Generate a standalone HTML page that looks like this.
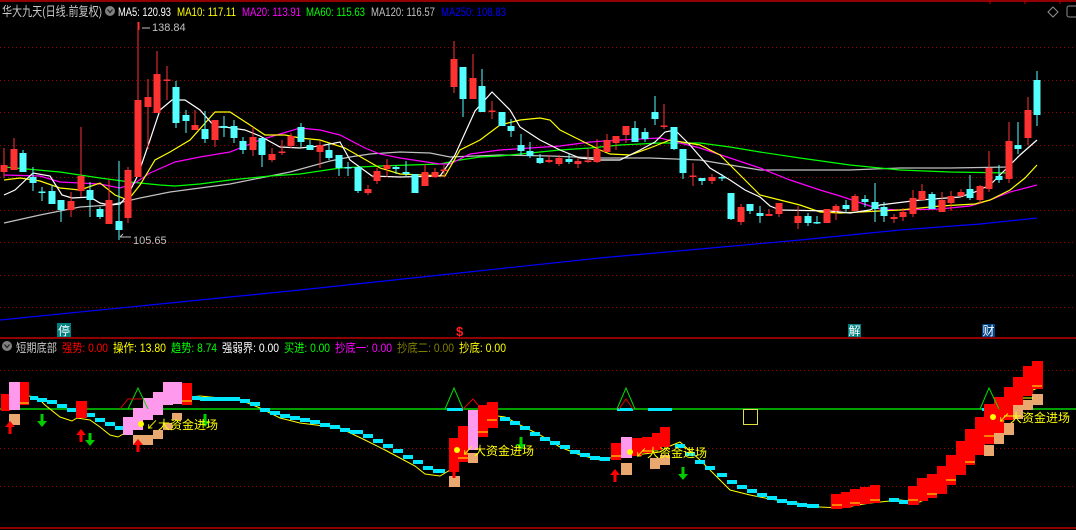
<!DOCTYPE html>
<html><head><meta charset="utf-8"><style>
html,body{margin:0;padding:0;background:#000;width:1076px;height:530px;overflow:hidden}
svg{display:block}
text{font-family:"Liberation Sans","Noto Sans CJK SC",sans-serif}
</style></head><body>
<svg width="1076" height="530" viewBox="0 0 1076 530" xmlns="http://www.w3.org/2000/svg">
<rect width="1076" height="530" fill="#000"/>
<!-- borders -->
<line x1="0" y1="1" x2="1076" y2="1" stroke="#c00000" stroke-width="1.5"/>
<line x1="990" y1="0" x2="990" y2="4" stroke="#c00000"/><line x1="1025" y1="0" x2="1025" y2="4" stroke="#c00000"/><line x1="1060" y1="0" x2="1060" y2="4" stroke="#c00000"/>
<line x1="0" y1="338" x2="1076" y2="338" stroke="#c00000" stroke-width="1.5"/>
<line x1="0" y1="528" x2="1076" y2="528" stroke="#c00000" stroke-width="1.5"/>
<!-- grid -->
<g stroke="#a00000" stroke-dasharray="1 3" stroke-width="1">
<line x1="0" y1="47.5" x2="1076" y2="47.5"/><line x1="0" y1="80.5" x2="1076" y2="80.5"/><line x1="0" y1="112.5" x2="1076" y2="112.5"/><line x1="0" y1="145.5" x2="1076" y2="145.5"/><line x1="0" y1="177.5" x2="1076" y2="177.5"/><line x1="0" y1="210.5" x2="1076" y2="210.5"/><line x1="0" y1="242.5" x2="1076" y2="242.5"/><line x1="0" y1="275.5" x2="1076" y2="275.5"/><line x1="0" y1="307.5" x2="1076" y2="307.5"/>
<line x1="0" y1="370.5" x2="1076" y2="370.5"/><line x1="0" y1="448.5" x2="1076" y2="448.5"/><line x1="0" y1="486.5" x2="1076" y2="486.5"/>
</g>
<!-- header -->
<text x="2" y="16" font-size="13" fill="#c8c8c8" textLength="100" lengthAdjust="spacingAndGlyphs">华大九天(日线.前复权)</text>
<circle cx="110" cy="11" r="5" fill="#808080"/><path d="M107.5 9.5 L110 12.5 L112.5 9.5" stroke="#222" stroke-width="1.3" fill="none"/>
<g font-size="12">
<text x="118" y="16" fill="#ffffff" textLength="53" lengthAdjust="spacingAndGlyphs">MA5: 120.93</text>
<text x="177" y="16" fill="#ffff00" textLength="59" lengthAdjust="spacingAndGlyphs">MA10: 117.11</text>
<text x="242" y="16" fill="#ff00ff" textLength="59" lengthAdjust="spacingAndGlyphs">MA20: 113.91</text>
<text x="306" y="16" fill="#00ff00" textLength="59" lengthAdjust="spacingAndGlyphs">MA60: 115.63</text>
<text x="371" y="16" fill="#c0c0c0" textLength="64" lengthAdjust="spacingAndGlyphs">MA120: 116.57</text>
<text x="441" y="16" fill="#0000ff" textLength="65" lengthAdjust="spacingAndGlyphs">MA250: 108.83</text>
</g>
<path d="M1053 7 L1058 12 L1053 17 L1048 12 Z" stroke="#909090" fill="none"/>
<rect x="1067" y="6" width="12" height="11" rx="2" stroke="#909090" fill="none"/>
<!-- labels -->
<line x1="139" y1="22" x2="139" y2="30" stroke="#ff3030"/><path d="M142 28 L150 28" stroke="#c0c0c0"/>
<text x="152" y="31" font-size="11" fill="#c0c0c0">138.84</text>
<path d="M120 237 L131 237 M120 237 L123 234" stroke="#c0c0c0" fill="none"/>
<text x="133" y="244" font-size="11" fill="#c0c0c0">105.65</text>
<!-- MA lines -->
<g fill="none" stroke-width="1.2">
<polyline stroke="#0000ff" points="0,320 150,305 300,290 450,274 600,258 700,249 800,240 900,230 980,224 1037,218"/>
<polyline stroke="#c0c0c0" points="4,223 40,215 80,207 110,205 140,198 170,192 200,188 230,184 260,178 290,172 330,161 350,157 370,154 400,152 430,153 450,157 500,155 550,156 600,158 650,158 700,160 730,165 760,170 800,170 850,170 900,168 950,168 1010,167"/>
<polyline stroke="#00ff00" points="4,167 60,172 100,178 130,182 160,185 175,186 200,184 230,180 270,176 300,174 340,168 360,167 380,166 440,164 460,160 480,157 500,156 540,152 560,150 590,148 620,145 660,143 700,143 730,147 760,152 800,158 850,165 900,170 950,172 1010,173"/>
<polyline stroke="#ff00ff" points="4,175 40,176 60,182 100,184 120,188 135,183 150,173 175,162 200,157 230,152 260,140 300,128 320,130 340,135 365,148 380,154 400,158 420,161 440,164 450,164 470,154 500,150 530,148 560,146 590,142 620,140 660,138 700,148 730,158 760,168 790,180 820,190 840,196 855,201 870,206 880,209 900,210 940,209 970,206 990,200 1010,192 1037,185"/>
<polyline stroke="#ffff00" points="4,180 20,178 40,181 60,188 80,190 100,183 115,195 128,200 140,185 155,160 170,152 190,140 215,112 230,112 250,125 265,135 285,135 300,138 320,140 345,148 380,168 400,174 445,176 460,150 480,140 500,125 520,120 540,118 550,120 560,130 580,140 600,150 610,154 630,155 650,148 670,140 700,145 720,155 740,175 760,195 780,200 800,205 820,212 840,213 860,212 900,210 940,206 975,204 990,200 1010,190 1025,178 1037,165"/>
<polyline stroke="#ffffff" points="4,195 15,190 33,173 50,176 62,195 72,198 90,197 100,203 110,205 120,204 128,195 138,175 150,140 160,110 172,100 185,100 200,110 215,127 225,127 245,130 260,136 280,147 300,148 320,146 340,142 350,160 372,176 400,177 440,176 455,155 475,111 492,92 500,100 510,110 520,127 540,140 560,150 580,158 600,160 620,160 640,150 655,142 665,132 675,130 690,145 710,168 730,180 745,190 760,197 770,206 780,210 830,211 850,213 870,210 880,205 920,200 960,197 975,192 990,185 1000,175 1020,155 1037,140"/>
</g>
<!-- red candles -->
<g stroke="#ff3232" fill="#ff3232">
<path d="M4 148V178M14 138V170M71 192V217M81 127V197M109 180V224M128 167V223M138 22V177M148 79V149M157 51V113M167 66V100M195 110V130M215 120V147M253 127V156M272 148V162M282 140V155M291 133V148M320 141V168M368 185V195M377 168V184M387 159V177M425 164V186M435 168V178M444 165V177M454 41V93M473 54V99M492 101V119M549 155V163M559 155V166M578 158V168M588 148V163M597 139V163M607 134V152M616 136V150M626 126V143M664 104V129M693 163V186M712 174V184M741 204V225M769 209V216M779 203V217M798 206V229M827 209V223M836 204V220M855 194V211M894 214V223M903 208V221M913 190V217M922 184V200M942 192V212M951 191V211M961 189V197M980 185V204M989 151V192M1009 122V183M1028 97V145" fill="none"/>
<g stroke="none">
<rect x="0.5" y="165" width="7" height="7"/><rect x="10.5" y="149" width="7" height="21"/><rect x="67.5" y="201" width="7" height="9"/><rect x="77.5" y="176" width="7" height="15"/><rect x="105.5" y="200" width="7" height="24"/><rect x="124.5" y="170" width="7" height="48"/><rect x="134.5" y="100" width="7" height="77"/><rect x="144.5" y="97" width="7" height="10"/><rect x="153.5" y="74" width="7" height="39"/><rect x="163.5" y="79.5" width="7" height="1.5"/><rect x="191.5" y="125" width="7" height="5"/><rect x="211.5" y="120" width="7" height="20"/><rect x="249.5" y="137" width="7" height="13"/><rect x="268.5" y="154" width="7" height="6"/><rect x="278.5" y="151.5" width="7" height="1.5"/><rect x="287.5" y="136" width="7" height="10"/><rect x="316.5" y="145" width="7" height="7"/><rect x="364.5" y="189" width="7" height="4"/><rect x="373.5" y="171" width="7" height="10"/><rect x="383.5" y="165" width="7" height="4"/><rect x="421.5" y="172" width="7" height="14"/><rect x="431.5" y="172" width="7" height="5"/><rect x="440.5" y="169.5" width="7" height="1.5"/><rect x="450.5" y="59" width="7" height="28"/><rect x="469.5" y="78" width="7" height="21"/><rect x="488.5" y="110.5" width="7" height="1.5"/><rect x="545.5" y="160" width="7" height="2"/><rect x="555.5" y="158" width="7" height="6"/><rect x="574.5" y="161" width="7" height="3"/><rect x="584.5" y="160.5" width="7" height="1.5"/><rect x="593.5" y="149" width="7" height="13"/><rect x="603.5" y="140" width="7" height="12"/><rect x="612.5" y="136" width="7" height="7"/><rect x="622.5" y="126" width="7" height="9"/><rect x="660.5" y="125.5" width="7" height="1.5"/><rect x="689.5" y="175.5" width="7" height="1.5"/><rect x="708.5" y="177" width="7" height="4"/><rect x="737.5" y="207" width="7" height="15"/><rect x="765.5" y="214" width="7" height="2"/><rect x="775.5" y="203" width="7" height="11"/><rect x="794.5" y="216" width="7" height="7"/><rect x="823.5" y="209" width="7" height="14"/><rect x="832.5" y="206" width="7" height="5"/><rect x="851.5" y="196" width="7" height="15"/><rect x="890.5" y="217" width="7" height="2"/><rect x="899.5" y="212" width="7" height="5"/><rect x="909.5" y="198" width="7" height="16"/><rect x="918.5" y="191" width="7" height="9"/><rect x="938.5" y="200" width="7" height="12"/><rect x="947.5" y="196" width="7" height="7"/><rect x="957.5" y="192" width="7" height="4"/><rect x="976.5" y="186" width="7" height="14"/><rect x="985.5" y="168" width="7" height="21"/><rect x="1005.5" y="141" width="7" height="38"/><rect x="1024.5" y="110" width="7" height="28"/>
</g></g>
<!-- cyan candles -->
<g stroke="#54ffff" fill="#54ffff">
<path d="M23 150V172M33 167V191M42 187V201M52 185V204M61 200V222M90 182V217M100 207V219M119 161V240M176 81V128M186 110V133M205 111V143M224 116V137M234 120V143M243 137V154M262 138V167M301 123V147M310 140V150M329 144V160M339 155V176M348 162V176M358 167V193M396 165V174M406 161V176M415 174V193M463 67V117M482 69V112M502 112V126M511 119V137M521 134V155M530 142V158M540 154V164M569 154V164M635 121V142M645 128V142M655 96V125M674 127V150M683 149V179M702 178V185M722 174V181M731 193V220M750 204V214M760 206V223M808 213V226M817 216V224M846 200V213M865 195V207M875 183V222M884 202V222M932 192V209M970 175V200M999 165V183M1018 122V154M1037 71V126" fill="none"/>
<g stroke="none">
<rect x="19.5" y="153" width="7" height="19"/><rect x="29.5" y="177" width="7" height="6"/><rect x="38.5" y="191.5" width="7" height="1.5"/><rect x="48.5" y="191" width="7" height="13"/><rect x="57.5" y="200" width="7" height="10"/><rect x="86.5" y="190" width="7" height="10"/><rect x="96.5" y="209" width="7" height="8"/><rect x="115.5" y="221" width="7" height="9"/><rect x="172.5" y="87" width="7" height="36"/><rect x="182.5" y="115" width="7" height="6"/><rect x="201.5" y="129" width="7" height="10"/><rect x="220.5" y="126" width="7" height="2"/><rect x="230.5" y="126" width="7" height="12"/><rect x="239.5" y="141" width="7" height="9"/><rect x="258.5" y="138" width="7" height="17"/><rect x="297.5" y="127" width="7" height="15"/><rect x="306.5" y="145" width="7" height="5"/><rect x="325.5" y="150" width="7" height="8"/><rect x="335.5" y="155" width="7" height="13"/><rect x="344.5" y="167" width="7" height="1.5"/><rect x="354.5" y="167" width="7" height="24"/><rect x="392.5" y="167" width="7" height="2"/><rect x="402.5" y="172" width="7" height="2"/><rect x="411.5" y="174" width="7" height="19"/><rect x="459.5" y="67" width="7" height="32"/><rect x="478.5" y="86" width="7" height="26"/><rect x="498.5" y="112" width="7" height="14"/><rect x="507.5" y="126" width="7" height="5"/><rect x="517.5" y="145" width="7" height="6"/><rect x="526.5" y="151" width="7" height="5"/><rect x="536.5" y="158" width="7" height="5"/><rect x="565.5" y="159" width="7" height="3"/><rect x="631.5" y="128" width="7" height="14"/><rect x="641.5" y="132" width="7" height="7"/><rect x="651.5" y="112" width="7" height="7"/><rect x="670.5" y="127" width="7" height="22"/><rect x="679.5" y="149" width="7" height="24"/><rect x="698.5" y="178" width="7" height="3"/><rect x="718.5" y="177" width="7" height="1.5"/><rect x="727.5" y="193" width="7" height="26"/><rect x="746.5" y="204" width="7" height="7"/><rect x="756.5" y="213" width="7" height="3"/><rect x="804.5" y="216" width="7" height="7"/><rect x="813.5" y="222" width="7" height="1.5"/><rect x="842.5" y="205" width="7" height="4"/><rect x="861.5" y="199" width="7" height="3"/><rect x="871.5" y="202" width="7" height="7"/><rect x="880.5" y="207" width="7" height="9"/><rect x="928.5" y="194" width="7" height="15"/><rect x="966.5" y="189" width="7" height="9"/><rect x="995.5" y="176" width="7" height="4"/><rect x="1014.5" y="145" width="7" height="4"/><rect x="1033.5" y="80" width="7" height="35"/>
</g></g>
<!-- bottom tags -->
<rect x="57" y="323" width="14" height="14" fill="#008080"/><text x="58" y="335" font-size="12" fill="#fff">停</text>
<text x="456" y="336" font-size="13" font-weight="bold" fill="#ff2020">$</text>
<rect x="848" y="324" width="13" height="13" fill="#008080"/><text x="848.5" y="335" font-size="12" fill="#fff">解</text>
<rect x="982" y="324" width="13" height="13" fill="#004488"/><text x="982.5" y="335" font-size="12" fill="#fff">财</text>
<!-- lower header -->
<circle cx="7" cy="346" r="5" fill="#808080"/><path d="M4.5 344.5 L7 347.5 L9.5 344.5" stroke="#222" stroke-width="1.3" fill="none"/>
<g font-size="12">
<text x="16" y="352" fill="#c8c8c8" textLength="41" lengthAdjust="spacingAndGlyphs">短期底部</text>
<text x="62" y="352" fill="#ff0000" textLength="46" lengthAdjust="spacingAndGlyphs">强势: 0.00</text>
<text x="113" y="352" fill="#ffff00" textLength="53" lengthAdjust="spacingAndGlyphs">操作: 13.80</text>
<text x="171" y="352" fill="#00ff00" textLength="46" lengthAdjust="spacingAndGlyphs">趋势: 8.74</text>
<text x="222" y="352" fill="#ffffff" textLength="57" lengthAdjust="spacingAndGlyphs">强弱界: 0.00</text>
<text x="284" y="352" fill="#00ff00" textLength="46" lengthAdjust="spacingAndGlyphs">买进: 0.00</text>
<text x="335" y="352" fill="#ff00ff" textLength="57" lengthAdjust="spacingAndGlyphs">抄底一: 0.00</text>
<text x="397" y="352" fill="#808000" textLength="57" lengthAdjust="spacingAndGlyphs">抄底二: 0.00</text>
<text x="459" y="352" fill="#ffff00" textLength="47" lengthAdjust="spacingAndGlyphs">抄底: 0.00</text>
</g>
<!-- lower panel -->
<line x1="0" y1="409" x2="1076" y2="409" stroke="#00ff00" stroke-width="1.2"/>
<!-- yellow line -->
<polyline fill="none" stroke="#ffff00" stroke-width="1" points="28,396 37,397 45,405 60,417 72,421 77,418 90,420 100,427 110,435 118,437 125,433 140,420 160,405 180,398 200,396 240,400 260,408 280,418 300,423 340,428 365,440 385,450 400,458 415,466 425,474 440,476 450,470 465,440 478,420 490,415 505,417 520,425 540,435 560,447 580,455 600,460 610,458 660,452 670,446 680,442 700,460 710,470 730,490 750,495 770,499 790,502 810,505 820,507 840,508 870,503 900,500 920,502 940,490 960,470 980,440 1000,415 1020,395 1043,386"/>
<!-- cyan steps -->
<g fill="#00e8ff">
<rect x="30" y="396" width="8" height="4"/><rect x="37" y="398" width="10" height="4"/><rect x="47" y="400" width="10" height="4"/><rect x="57" y="404" width="10" height="4"/><rect x="67" y="408" width="10" height="4"/><rect x="85" y="413" width="10" height="4"/><rect x="95" y="418" width="10" height="4"/><rect x="105" y="422" width="10" height="4"/><rect x="115" y="426" width="10" height="4"/>
<rect x="190" y="396" width="10" height="4"/><rect x="200" y="397" width="40" height="4"/><rect x="240" y="399" width="10" height="4"/><rect x="250" y="402" width="10" height="4"/><rect x="260" y="408" width="10" height="4"/><rect x="270" y="411" width="10" height="4"/><rect x="280" y="414" width="10" height="4"/><rect x="290" y="416" width="10" height="4"/><rect x="300" y="418" width="10" height="4"/><rect x="310" y="420" width="10" height="4"/><rect x="320" y="423" width="10" height="4"/><rect x="330" y="425" width="10" height="4"/><rect x="340" y="428" width="10" height="4"/><rect x="350" y="430" width="13" height="4"/><rect x="363" y="434" width="10" height="4"/><rect x="373" y="439" width="10" height="4"/><rect x="383" y="444" width="10" height="4"/><rect x="393" y="449" width="10" height="4"/><rect x="403" y="455" width="10" height="4"/><rect x="413" y="460" width="10" height="4"/><rect x="423" y="466" width="10" height="4"/><rect x="433" y="469" width="12" height="4"/>
<rect x="447" y="408" width="16" height="3"/><rect x="500" y="417" width="10" height="4"/><rect x="510" y="421" width="10" height="4"/><rect x="520" y="426" width="10" height="4"/><rect x="530" y="432" width="10" height="4"/><rect x="540" y="437" width="10" height="4"/><rect x="550" y="441" width="10" height="4"/><rect x="560" y="445" width="10" height="4"/><rect x="570" y="450" width="10" height="4"/><rect x="580" y="453" width="10" height="4"/><rect x="590" y="456" width="10" height="4"/><rect x="600" y="457" width="10" height="4"/>
<rect x="617" y="408" width="16" height="3"/><rect x="648" y="408" width="24" height="3"/>
<rect x="675" y="444" width="10" height="4"/><rect x="685" y="452" width="10" height="4"/><rect x="695" y="460" width="10" height="4"/><rect x="705" y="466" width="10" height="4"/><rect x="717" y="473" width="10" height="4"/><rect x="727" y="480" width="10" height="4"/><rect x="737" y="485" width="10" height="4"/><rect x="747" y="489" width="10" height="4"/><rect x="757" y="493" width="10" height="4"/><rect x="767" y="496" width="10" height="4"/><rect x="777" y="499" width="10" height="4"/><rect x="787" y="501" width="10" height="4"/><rect x="797" y="503" width="10" height="4"/><rect x="807" y="504" width="12" height="4"/>
<rect x="889" y="498" width="10" height="4"/><rect x="899" y="500" width="10" height="4"/><rect x="982" y="408" width="20" height="3"/>
</g>
<!-- red blocks -->
<g fill="#ff0000">
<rect x="1" y="394" width="9" height="17"/><rect x="20" y="382" width="9" height="23"/><rect x="76" y="401" width="11" height="17"/><rect x="182" y="383" width="10" height="22"/>
<rect x="449" y="438" width="10" height="34"/><rect x="458" y="426" width="10" height="36"/><rect x="478" y="405" width="10" height="32"/><rect x="487" y="402" width="11" height="26"/>
<rect x="611" y="443" width="10" height="17"/><rect x="632" y="438" width="10" height="18"/><rect x="642" y="437" width="10" height="16"/><rect x="652" y="433" width="10" height="17"/><rect x="660" y="427" width="10" height="20"/>
<rect x="831" y="494" width="11" height="15"/><rect x="841" y="492" width="10" height="16"/><rect x="850" y="489" width="10" height="17"/><rect x="860" y="487" width="10" height="17"/><rect x="870" y="485" width="10" height="18"/>
<rect x="908" y="486" width="11" height="19"/><rect x="917" y="478" width="11" height="23"/><rect x="927" y="474" width="10" height="24"/><rect x="937" y="466" width="10" height="28"/><rect x="946" y="455" width="10" height="30"/><rect x="956" y="441" width="10" height="34"/><rect x="965" y="429" width="10" height="36"/><rect x="975" y="417" width="10" height="38"/><rect x="984" y="404" width="10" height="40"/><rect x="994" y="397" width="10" height="36"/><rect x="1004" y="387" width="10" height="33"/><rect x="1013" y="377" width="10" height="30"/><rect x="1023" y="366" width="10" height="30"/><rect x="1032" y="361" width="11" height="28"/>
</g>
<!-- pink blocks -->
<g fill="#ff99ee">
<rect x="9" y="382" width="11" height="28"/><rect x="123" y="417" width="10" height="18"/><rect x="133" y="408" width="10" height="22"/><rect x="143" y="398" width="10" height="22"/><rect x="153" y="392" width="10" height="23"/><rect x="163" y="382" width="10" height="23"/><rect x="173" y="382" width="9" height="22"/>
<rect x="468" y="410" width="10" height="40"/><rect x="621" y="437" width="11" height="21"/>
</g>
<!-- tan blocks -->
<g fill="#e8a870">
<rect x="9" y="414" width="11" height="11"/><rect x="133" y="435" width="20" height="10"/><rect x="153" y="430" width="10" height="9"/><rect x="163" y="423" width="9" height="7"/><rect x="172" y="413" width="10" height="7"/>
<rect x="449" y="476" width="11" height="11"/><rect x="468" y="453" width="10" height="10"/><rect x="621" y="463" width="11" height="12"/><rect x="650" y="458" width="10" height="11"/><rect x="660" y="455" width="10" height="10"/>
<rect x="984" y="445" width="10" height="11"/><rect x="994" y="433" width="10" height="11"/><rect x="1004" y="423" width="10" height="12"/><rect x="1013" y="405" width="10" height="14"/><rect x="1023" y="400" width="10" height="10"/><rect x="1032" y="394" width="11" height="11"/>
</g>
<!-- yellow ticks on red -->
<g stroke="#ffff00" stroke-width="1">
<path d="M20 403h9M182 401h10M458 458h10M478 432h10M487 420h10M611 456h10M642 451h10M832 505h10M850 503h10M870 500h10M908 500h10M927 494h10M946 480h10M965 462h10M984 436h10M1004 416h10M1023 398h10M1032 386h10"/>
</g>
<!-- triangles -->
<g fill="none" stroke-width="1">
<path d="M128 409 L138 388 L148 409" stroke="#00dd00"/><path d="M120 409 L128 399 L142 399" stroke="#dd0000"/>
<path d="M445 409 L454 388 L463 409" stroke="#00dd00"/><path d="M463 409 L473 399 L478 405" stroke="#dd0000"/>
<path d="M617 409 L626 388 L635 409" stroke="#00dd00"/><path d="M619 409 L626 399 L633 409" stroke="#dd0000"/>
<path d="M980 409 L989 388 L999 409" stroke="#00dd00"/>
<rect x="743.5" y="409.5" width="14" height="15" stroke="#e0e040"/>
</g>
<!-- arrows -->
<g fill="#ff0000">
<path d="M10 421 l-5 6 h3.5 v7 h3 v-7 h3.5z"/><path d="M81 429 l-5 6 h3.5 v7 h3 v-7 h3.5z"/><path d="M138 439 l-5 6 h3.5 v7 h3 v-7 h3.5z"/><path d="M454 465 l-5 6 h3.5 v7 h3 v-7 h3.5z"/><path d="M615 469 l-5 6 h3.5 v7 h3 v-7 h3.5z"/>
</g>
<g fill="#00cc00">
<path d="M42 427 l-5 -6 h3.5 v-7 h3 v7 h3.5z"/><path d="M90 446 l-5 -6 h3.5 v-7 h3 v7 h3.5z"/><path d="M205 427 l-5 -6 h3.5 v-7 h3 v7 h3.5z"/><path d="M521 450 l-5 -6 h3.5 v-7 h3 v7 h3.5z"/><path d="M683 480 l-5 -6 h3.5 v-7 h3 v7 h3.5z"/>
</g>
<!-- labels -->
<g fill="#ffff00" font-size="12">
<circle cx="141" cy="424" r="3"/><text x="146" y="429">↙大资金进场</text>
<circle cx="457" cy="450" r="3"/><text x="462" y="455">↙大资金进场</text>
<circle cx="630" cy="452" r="3"/><text x="635" y="457">↙大资金进场</text>
<circle cx="993" cy="417" r="3"/><text x="998" y="422">↙大资金进场</text>
</g>
</svg>
</body></html>
